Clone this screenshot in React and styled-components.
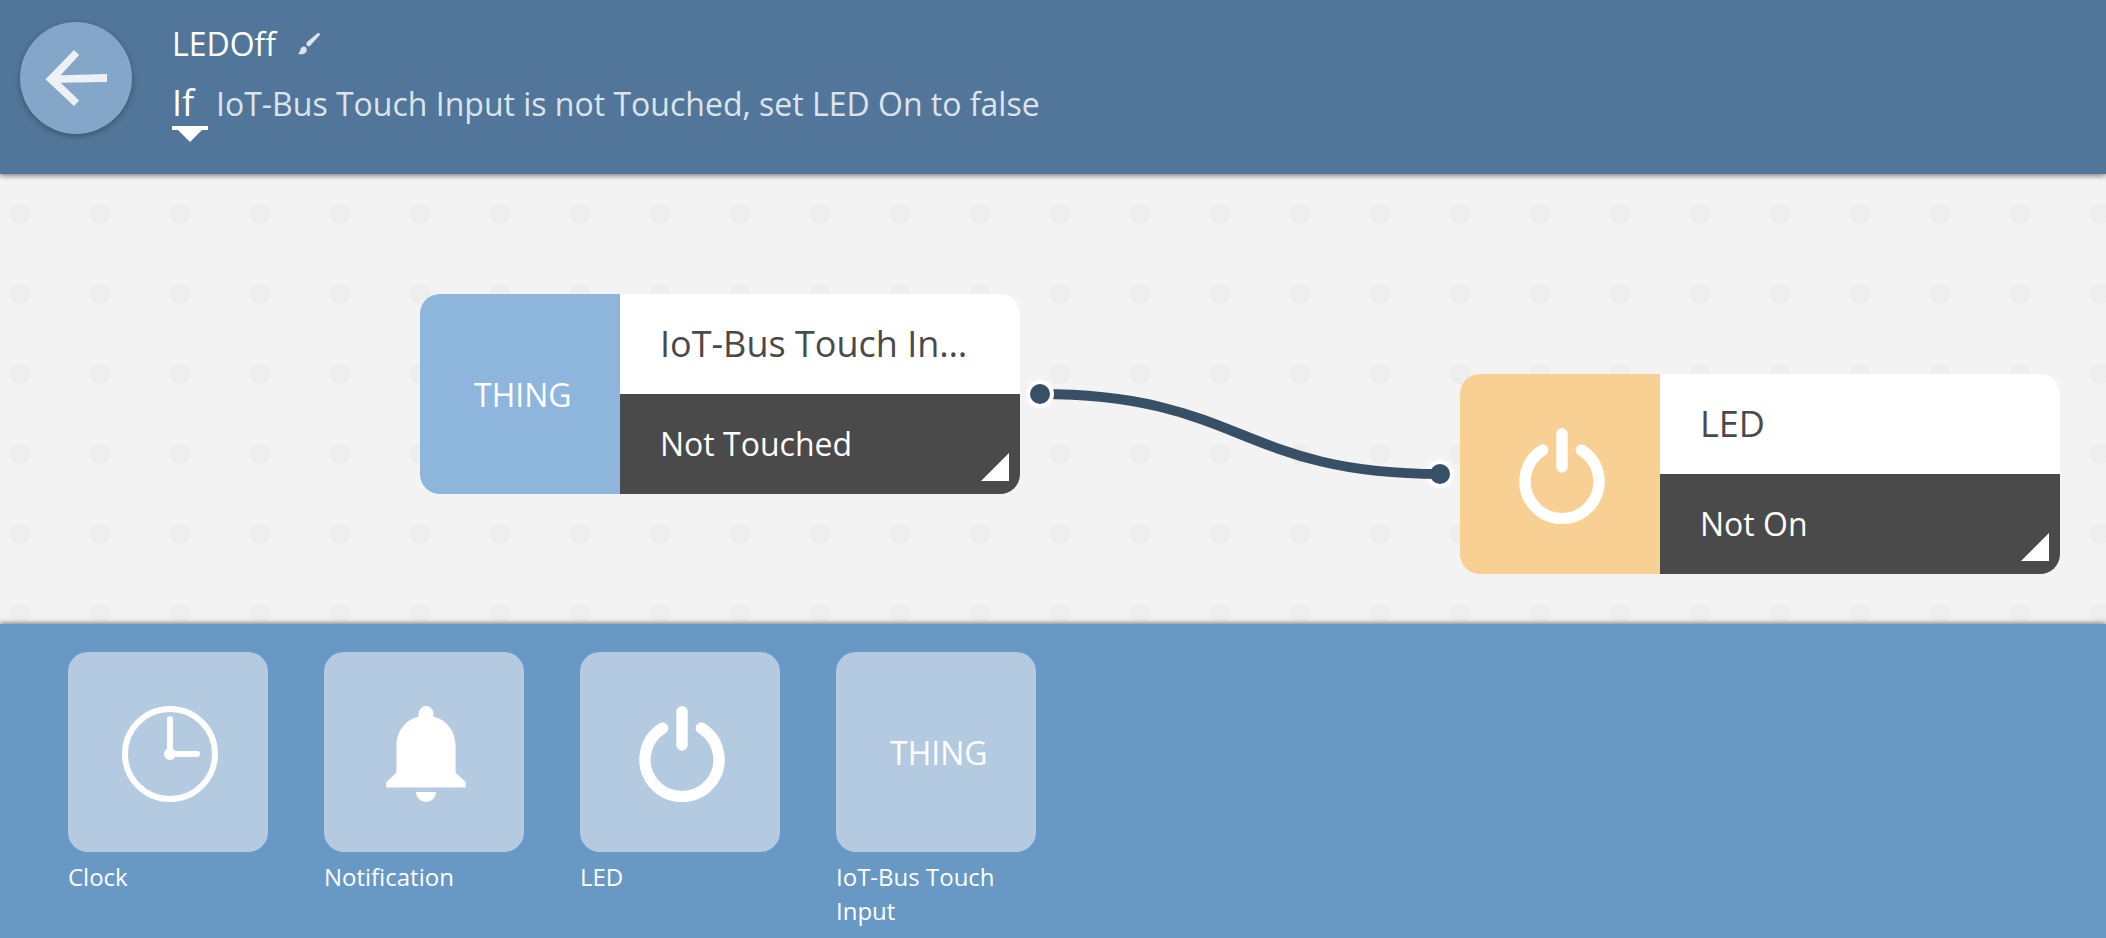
import React from "react";
import styled, { createGlobalStyle } from "styled-components";

const GlobalStyle = createGlobalStyle`
  *, *::before, *::after { box-sizing: border-box; }
  body {
    margin: 0;
    font-family: "Open Sans", "Noto Sans", sans-serif;
    font-size: 32px;
    color: #fff;
  }
  button, input, select { font: inherit; color: inherit; }
`;

const Page = styled.div`
  display: flex;
  flex-direction: column;
  min-height: 100vh;
`;

const Header = styled.header`
  position: relative;
  z-index: 1;
  display: flex;
  align-items: flex-start;
  gap: 40px;
  height: 174px;
  padding: 22px 20px;
  background: #527699;
  box-shadow: 0 2px 5px rgba(0, 0, 0, 0.45);
`;

const BackButton = styled.button`
  flex: none;
  width: 112px;
  height: 112px;
  padding: 0;
  border: 0;
  border-radius: 50%;
  background: #83a6c9;
  box-shadow: 0 2px 6px rgba(0, 0, 0, 0.3);
  cursor: pointer;
  svg { display: block; }
`;

const RuleInfo = styled.div`
  display: flex;
  flex-direction: column;
`;

const RuleName = styled.h1`
  display: flex;
  align-items: center;
  gap: 22px;
  height: 44px;
  margin: 0;
  font-size: 32px;
  font-weight: 400;
  line-height: 44px;
`;

const RenameButton = styled.button`
  padding: 0;
  border: 0;
  background: none;
  cursor: pointer;
  svg { display: block; }
`;

const Sentence = styled.div`
  display: flex;
  align-items: flex-start;
  gap: 8px;
  margin: 14px 0 0;
  line-height: 48px;
  color: #dce4eb;
`;

const Trigger = styled.label`
  display: flex;
  flex-direction: column;
  width: 36px;
  color: #fff;
`;

const TriggerSelect = styled.select`
  appearance: none;
  width: 36px;
  height: 50px;
  padding: 0;
  border: 0;
  border-bottom: 4px solid #fff;
  border-radius: 0;
  background: none;
  font-size: 36px;
  line-height: 46px;
  cursor: pointer;
  option { color: #4a4a4a; }
`;

const DownMark = styled.span`
  align-self: center;
  border: 12px solid transparent;
  border-top-color: #fff;
  border-bottom: 0;
`;

const Canvas = styled.main`
  position: relative;
  flex: none;
  height: 450px;
  overflow: hidden;
  background: #f3f3f3 radial-gradient(circle, #eee 10px, transparent 11px) -20px 0 / 80px 80px;
`;

const Wire = styled.svg`
  position: absolute;
  left: 1020px;
  top: 200px;
`;

const Node = styled.section`
  position: absolute;
  left: ${(p) => p.$x}px;
  top: ${(p) => p.$y}px;
  display: grid;
  grid-template-columns: 200px 400px;
  height: 200px;
  border-radius: 20px;
  overflow: hidden;
`;

const NodeBadge = styled.div`
  padding: 54px;
  background: ${(p) => p.$color};
`;

const NodeBody = styled.div`
  display: grid;
  grid-template-rows: 100px 100px;
`;

const NodeTitle = styled.h2`
  margin: 0;
  padding: 0 40px;
  overflow: hidden;
  background: #fff;
  color: #4a4a4a;
  font-size: 36px;
  font-weight: 400;
  line-height: 100px;
  text-overflow: ellipsis;
  white-space: nowrap;
`;

const NodeState = styled.button`
  position: relative;
  padding: 0 40px;
  border: 0;
  background: #4a4a4a;
  line-height: 100px;
  text-align: left;
  cursor: pointer;
  &::after {
    content: "";
    position: absolute;
    right: 11px;
    bottom: 13px;
    border: 14px solid transparent;
    border-right-color: #fff;
    border-bottom-color: #fff;
  }
`;

const ThingText = styled.span`
  display: block;
  width: 96px;
  font-size: 32px;
  line-height: 94px;
  text-align: left;
`;

const Palette = styled.nav`
  position: relative;
  z-index: 1;
  display: flex;
  flex: 1;
  align-items: flex-start;
  gap: 56px;
  padding: 28px 68px 0;
  background: #6899c5;
  box-shadow: 0 -1px 5px rgba(0, 0, 0, 0.5);
`;

const PaletteItem = styled.button`
  width: 200px;
  padding: 0;
  border: 0;
  background: none;
  font-size: 24px;
  line-height: 34px;
  text-align: left;
  cursor: pointer;
`;

const Tile = styled.span`
  display: block;
  height: 200px;
  margin-bottom: 8px;
  padding: 54px;
  border-radius: 20px;
  background: #b3cae1;
`;

const Icon = styled.svg.attrs({ width: 96, height: 96, viewBox: "0 0 96 96", "aria-hidden": true })`
  display: block;
`;

const PowerIcon = () => (
  <Icon fill="none" stroke="#fff" strokeWidth="11.4" strokeLinecap="round">
    <path d="M48 5.7V39" />
    <path d="M28.6 22.1A37 37 0 1 0 67.4 22.1" />
  </Icon>
);

const ClockIcon = () => (
  <Icon fill="none" stroke="#fff" strokeWidth="6" strokeLinecap="round">
    <circle cx="48" cy="48" r="45" />
    <path d="M48 13.3V48H75" />
    <circle cx="48" cy="48" r="6" fill="#fff" stroke="none" />
  </Icon>
);

const BellIcon = () => (
  <Icon fill="#fff">
    <path d="M40.6 10.6V7.4a7.4 7.4 0 0 1 14.8 0V10.6C68 13.5 77.6 25 77.6 40V66.7L87.7 76V81.5H8.3V76L18.4 66.7V40C18.4 25 28 13.5 40.6 10.6Z" />
    <path d="M38 86H58A10 10 0 0 1 38 86Z" />
  </Icon>
);

const Thing = () => <ThingText>THING</ThingText>;

const nodes = [
  { x: 420, y: 120, color: "#8eb6dd", Glyph: Thing, title: "IoT-Bus Touch Input", state: "Not Touched" },
  { x: 1460, y: 200, color: "#f8d094", Glyph: PowerIcon, title: "LED", state: "Not On" },
];

const palette = [
  { label: "Clock", Glyph: ClockIcon },
  { label: "Notification", Glyph: BellIcon },
  { label: "LED", Glyph: PowerIcon },
  { label: "IoT-Bus Touch Input", Glyph: Thing },
];

export default function App() {
  return (
    <Page>
      <GlobalStyle />
      <Header>
        <BackButton aria-label="Back">
          <svg width="112" height="112" viewBox="0 0 112 112" fill="#edf1f5">
            <path d="M54 28L59.2 33L40.6 53.2L87 52V60L40.6 60.8L59.2 78.6L54 84L25.5 57.3Z" />
          </svg>
        </BackButton>
        <RuleInfo>
          <RuleName>
            LEDOff
            <RenameButton aria-label="Rename">
              <svg width="22" height="22" viewBox="0 0 22 22" fill="#dce4eb">
                <path d="M21.6 .4C20.8 -.3 19.8 .1 19 .8L9.3 8.8Q7.9 10.4 8.6 12Q9.8 13.9 11.4 13.3L12.6 12.3L21.4 2.6Q22.3 1.3 21.6 .4Z" />
                <path d="M8 14.2Q5.3 12.6 3.1 15C2 16.5 2.6 19 0 20.7C3 22 7 21.2 8.5 18.4Q9.4 16 8 14.2Z" />
              </svg>
            </RenameButton>
          </RuleName>
          <Sentence>
            <Trigger>
              <TriggerSelect aria-label="Condition" defaultValue="If">
                <option>If</option>
              </TriggerSelect>
              <DownMark />
            </Trigger>
            <span>IoT-Bus Touch Input is not Touched, set LED On to false</span>
          </Sentence>
        </RuleInfo>
      </Header>
      <Canvas>
        <Wire width="440" height="120" viewBox="0 0 440 120" fill="#385066">
          <circle cx="420" cy="100" r="12" stroke="#fff" strokeWidth="4" />
          <path d="M20 20C220 20 220 100 420 100" fill="none" stroke="#385066" strokeWidth="10" />
          <circle cx="20" cy="20" r="12" stroke="#fff" strokeWidth="4" />
        </Wire>
        {nodes.map(({ x, y, color, Glyph, title, state }) => (
          <Node key={title} $x={x} $y={y}>
            <NodeBadge $color={color}>
              <Glyph />
            </NodeBadge>
            <NodeBody>
              <NodeTitle>{title}</NodeTitle>
              <NodeState>{state}</NodeState>
            </NodeBody>
          </Node>
        ))}
      </Canvas>
      <Palette>
        {palette.map(({ label, Glyph }) => (
          <PaletteItem key={label}>
            <Tile>
              <Glyph />
            </Tile>
            {label}
          </PaletteItem>
        ))}
      </Palette>
    </Page>
  );
}
